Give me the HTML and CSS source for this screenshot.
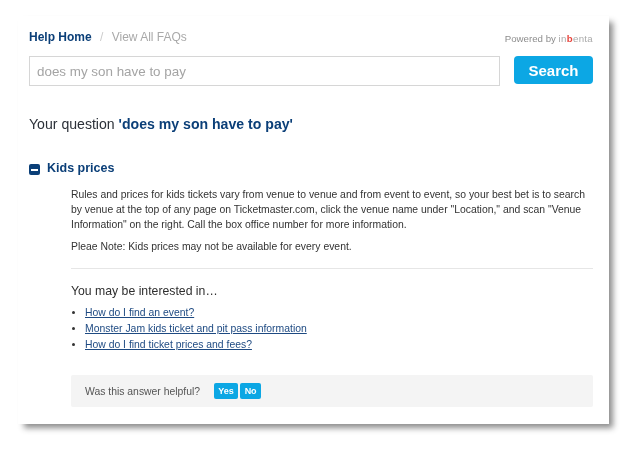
FILE: index.html
```html
<!DOCTYPE html>
<html lang="en">
<head>
<meta charset="UTF-8" />
<title>Help - Kids prices</title>
<link rel="stylesheet" href="styles.css">
</head>
<body>
<div class="panel">
  <div class="top-row">
    <div class="crumbs">
      <a class="crumb-home" href="#">Help Home</a>
      <span class="crumb-sep">/</span>
      <a class="crumb-faq" href="#">View All FAQs</a>
    </div>
    <div class="powered">Powered by <span class="brand">in<b>b</b>enta</span></div>
  </div>

  <form class="search">
    <input class="search-input" type="text" placeholder="does my son have to pay" />
    <button class="search-btn" type="button">Search</button>
  </form>

  <h2 class="question">Your question <strong>'does my son have to pay'</strong></h2>

  <div class="faq-title">
    <span class="minus"><span></span></span>
    <h3>Kids prices</h3>
  </div>

  <div class="answer">
    <p>Rules and prices for kids tickets vary from venue to venue and from event to event, so your best bet is to search by venue at the top of any page on Ticketmaster.com, click the venue name under "Location," and scan "Venue Information" on the right. Call the box office number for more information.</p>
    <p class="note">Pleae Note: Kids prices may not be available for every event.</p>
    <hr />
    <h4>You may be interested in…</h4>
    <ul>
      <li><a href="#">How do I find an event?</a></li>
      <li><a href="#">Monster Jam kids ticket and pit pass information</a></li>
      <li><a href="#">How do I find ticket prices and fees?</a></li>
    </ul>
    <div class="helpful">
      <span>Was this answer helpful?</span>
      <div class="helpful-btns">
        <button class="btn-yes" type="button">Yes</button>
        <button class="btn-no" type="button">No</button>
      </div>
    </div>
  </div>
</div>
</body>
</html>
```

FILE: styles.css
```css
html, body {
  height: 100%;
}
body {
  box-sizing: border-box;
  margin: 0;
  padding: 16px 0 0 18px;
  background: #fff;
  font-family: "Liberation Sans", Arial, sans-serif;
}
.panel {
  box-sizing: border-box;
  width: 591px;
  height: 408px;
  padding: 12px 16px 0 11px;
  background: #fff;
  box-shadow: 5px 5px 6px -1px rgba(0,0,0,0.45);
  filter: blur(0.3px);
}
.top-row {
  display: flex;
  justify-content: space-between;
  align-items: flex-end;
  height: 17px;
}
.crumbs {
  font-size: 12px;
  line-height: 16px;
}
.crumbs a {
  text-decoration: none;
}
.crumb-home {
  color: #0b3f78;
  font-weight: bold;
}
.crumb-sep {
  color: #ccc;
  margin: 0 5px;
}
.crumb-faq {
  color: #a9a9a9;
}
.powered {
  font-size: 9.7px;
  line-height: 12px;
  color: #8d8d8d;
}
.brand {
  color: #aaa;
  letter-spacing: 0.3px;
}
.brand b {
  color: #e8443c;
  font-weight: bold;
}
.search {
  display: flex;
  justify-content: space-between;
  margin-top: 11px;
}
.search-input {
  box-sizing: border-box;
  width: 471px;
  height: 30px;
  padding: 0 7px;
  border: 1px solid #d6d6d6;
  font-family: inherit;
  font-size: 13.4px;
  outline: none;
}
.search-input::placeholder {
  color: #a4a4a4;
  opacity: 1;
}
.search-btn {
  width: 79px;
  height: 28px;
  border: none;
  border-radius: 4px;
  background: #0ca7e4;
  color: #fff;
  font-family: inherit;
  font-size: 15px;
  font-weight: bold;
  padding: 0;
}
.question {
  margin: 28px 0 0;
  font-size: 14.1px;
  line-height: 20px;
  font-weight: normal;
  color: #2b3038;
}
.question strong {
  color: #0b3f78;
}
.faq-title {
  display: flex;
  align-items: center;
  gap: 7px;
  margin-top: 26px;
  height: 16px;
}
.faq-title h3 {
  margin: 0;
  font-size: 12.5px;
  line-height: 16px;
  color: #0b3f78;
}
.minus {
  display: flex;
  align-items: center;
  justify-content: center;
  width: 11px;
  height: 11px;
  margin-top: 3px;
  border-radius: 2px;
  background: #0b3f78;
}
.minus span {
  width: 7px;
  height: 2px;
  background: #fff;
}
.answer {
  margin: 11px 0 0 42px;
  font-size: 10.4px;
  line-height: 15px;
  color: #333;
}
.answer p {
  margin: 0;
}
.answer .note {
  margin-top: 7px;
}
.answer hr {
  margin: 14px 0 0;
  border: none;
  border-top: 1px solid #e6e6e6;
}
.answer h4 {
  margin: 14px 0 0;
  font-size: 12.25px;
  line-height: 16px;
  font-weight: normal;
  color: #2e2e2e;
}
.answer ul {
  margin: 6px 0 0;
  padding: 0 0 0 14px;
}
.answer li {
  line-height: 16px;
}
.answer li a {
  color: #1e4a82;
}
.helpful {
  display: flex;
  align-items: center;
  gap: 14px;
  height: 32px;
  margin-top: 22px;
  padding-left: 14px;
  border-radius: 2px;
  background: #f4f4f4;
  color: #555;
}
.helpful-btns {
  display: flex;
  gap: 2px;
}
.helpful-btns button {
  height: 16px;
  padding: 0;
  border: none;
  border-radius: 2px;
  background: #0ca7e4;
  color: #fff;
  font-family: inherit;
  font-size: 9px;
  font-weight: bold;
}
.btn-yes {
  width: 24px;
}
.btn-no {
  width: 21px;
}
```
